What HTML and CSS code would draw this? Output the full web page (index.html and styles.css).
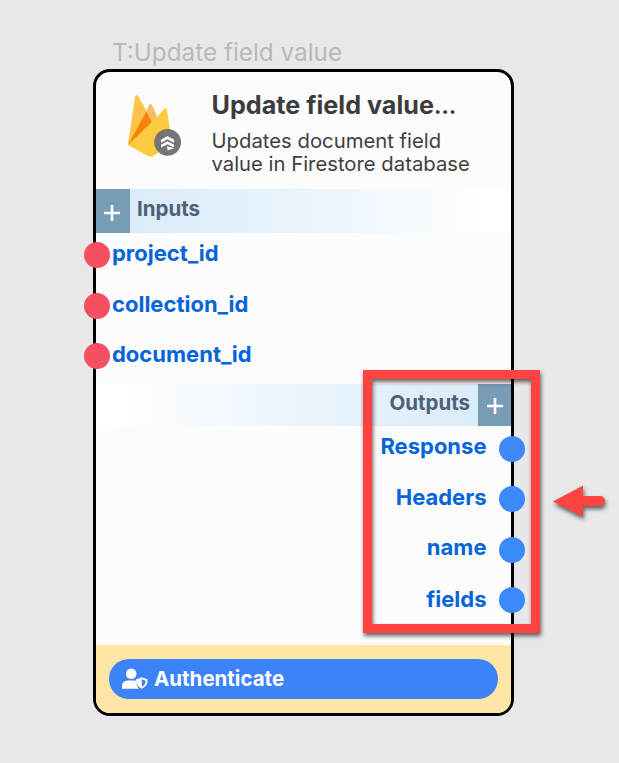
FILE: index.html
```html
<!DOCTYPE html>
<html lang="en">
<head>
<meta charset="utf-8">
<title>Update field value</title>
<link rel="stylesheet" href="styles.css">
</head>
<body>
<main class="canvas">
  <div class="tag"><span>T:Update field value</span></div>
  <section class="card">
    <header class="head">
      <svg class="logo" viewBox="0 0 56 66" width="56" height="66">
        <path d="M2 51 9.2 3Q10 .2 12 2L21 18 24 14 30 24 38 15Q40 13 41 16L46 50 27 62Q24.500 63.500 22 62Z" fill="#fccb3e"/>
        <path d="M2 51 9.200 3Q10 .5 12 2L20.500 17.500 8 46Z" fill="#ffc24a"/>
        <path d="M20.300 17.500 23 11Q24.500 9 26 11L31 22 25.500 28Z" fill="#f4bd62"/>
        <path d="M2 51 20.300 17.500 25.800 28Z" fill="#f6820c"/>
        <circle cx="41.600" cy="48.300" r="13.400" fill="#757575"/>
        <path d="M35 45.800 41.500 42 48 45.800V48.800L41.500 45.200 35 48.800ZM35 50.800 41.500 47.200 48 50.800V53.500L41.500 50.200 35 53.500ZM41 52.300 48 54.200 41.700 56.500Z" fill="#fff"/>
      </svg>
      <div class="heading">
        <h1>Update field value<span class="dots">…</span></h1>
        <p>Updates document field<br>value in Firestore database</p>
      </div>
    </header>
    <div class="band inputs-band">
      <button class="plus" aria-label="Add input"><svg width="18" height="18" viewBox="0 0 18 18"><path d="M9 1V17M1 9H17"/></svg></button>
      <span class="band-title">Inputs</span>
    </div>
    <ul class="ports inputs">
      <li><i></i><span>project_id</span></li>
      <li><i></i><span>collection_id</span></li>
      <li><i></i><span>document_id</span></li>
    </ul>
    <div class="band outputs-band">
      <span class="band-title">Outputs</span>
      <button class="plus" aria-label="Add output"><svg width="18" height="18" viewBox="0 0 18 18"><path d="M9 1V17M1 9H17"/></svg></button>
    </div>
    <ul class="ports outputs">
      <li><span>Response</span><i></i></li>
      <li><span>Headers</span><i></i></li>
      <li><span>name</span><i></i></li>
      <li><span>fields</span><i></i></li>
    </ul>
    <footer class="foot">
      <button class="auth">
        <svg width="26" height="22" viewBox="0 0 26 22">
          <circle cx="9.200" cy="5.800" r="5.300" fill="#fff"/>
          <path d="M0 20.700V18.500Q0 12.500 6 12.500H12.500Q13.500 12.500 14.200 13 14.200 18 17 20.700Z" fill="#fff"/>
          <path d="M19.800 9.200 25.500 11.500Q26 18 19.800 20.700 13.800 18 14 11.500Z" fill="#fff"/>
          <path d="M19.800 11.300 23.500 12.700Q23.500 16.800 19.800 18.700Z" fill="#3d83f8"/>
        </svg>
        <span>Authenticate</span>
      </button>
    </footer>
  </section>
  <div class="highlight"></div>
  <svg class="arrow" width="64" height="44" viewBox="0 0 64 44"><path d="M5 21.500 35 5.500V16H52A5 5 0 0 1 52 26H35V36.500Z" fill="#ff4343"/></svg>
</main>
</body>
</html>
```
FILE: styles.css
```css
* { box-sizing: border-box; }
body { margin: 0; background: #e8e8e8; font-family: Inter, "Liberation Sans", sans-serif; }
.canvas { position: relative; width: 619px; height: 763px; padding: 36px 0 0 93px; overflow: hidden; }
.tag { height: 33.300px; padding-left: 19px; font-size: 24.300px; line-height: 32px; color: #b9b9b9; white-space: nowrap; }
.card { width: 421px; height: 646.700px; border: 3px solid #000; border-radius: 17px; background: #fcfcfc; display: flex; flex-direction: column; }
.head { height: 117.200px; flex: none; display: flex; padding: 21.500px 0 0 30px; }
.logo { flex: none; margin-right: 29.500px; }
h1 { margin: -3.500px 0 0; font-size: 25.200px; line-height: 30px; font-weight: 700; color: #3c3c3c; white-space: nowrap; }
.dots { font-size: 21px; line-height: 1; font-weight: 800; letter-spacing: -.5px; }
p { margin: 9px 0 0; font-size: 20.300px; line-height: 23px; color: #3f3f3f; white-space: nowrap; }
.band { height: 43.500px; flex: none; display: flex; }
.inputs-band { background: linear-gradient(90deg, #d8eaf7, #e8f3fc 45%, #fafdff 85%, #fff); }
.outputs-band { height: 42px; justify-content: flex-end; background: linear-gradient(270deg, #d8eaf7, #e8f3fc 45%, #fafdff 85%, #fff); }
.plus { width: 34px; border: 0; padding: 4px 0 0; background: #789bb6; display: flex; align-items: center; justify-content: center; }
.outputs-band .plus { width: 33px; padding-top: 3px; }
.plus path { stroke: #fff; stroke-width: 2.600; fill: none; }
.inputs-band .plus { padding-right: 2px; }
.band-title { font-size: 20.500px; line-height: 24px; font-weight: 700; color: #4b6279; padding: 7.500px 8px 7px 7px; }
.ports { list-style: none; margin: 0; padding: 0; flex: none; font-size: 22px; font-weight: 700; line-height: 26px; color: #0465d9; }
.ports li { display: flex; height: 50.500px; }
.ports i { width: 26px; height: 26px; border-radius: 50%; flex: none; }
.inputs { height: 151px; padding-top: 9.500px; margin-left: -12.500px; }
.inputs i { background: #f45062; margin-right: 2.500px; }
.inputs span { margin-top: -2px; }
.outputs { height: 219.500px; padding-top: 10px; margin-right: -14px; }
.outputs li { justify-content: flex-end; }
.outputs i { background: #3c89f9; margin-left: 12.500px; }
.outputs span { margin-top: -3px; }
.outputs li:nth-child(2) span { margin-top: -2px; }
.outputs li:last-child span { margin-top: -1px; }
.foot { flex: 1; padding: 13.500px 13px; background: #ffe6a6; border-radius: 0 0 14px 14px; }
.auth { width: 389px; height: 40.500px; border: 0; border-radius: 21px; padding: 0 13px; background: #3d83f8; color: #fff; font: 700 20.500px/24px Inter, sans-serif; display: flex; align-items: center; gap: 6px; }
.highlight { position: absolute; left: 363px; top: 370px; width: 177px; height: 263px; border: 9px solid #ff4343; filter: drop-shadow(1px 3px 2px rgba(0,0,0,.6)); }
.arrow { position: absolute; left: 548px; top: 480px; overflow: visible; filter: drop-shadow(1px 3px 2px rgba(0,0,0,.6)); }
```
